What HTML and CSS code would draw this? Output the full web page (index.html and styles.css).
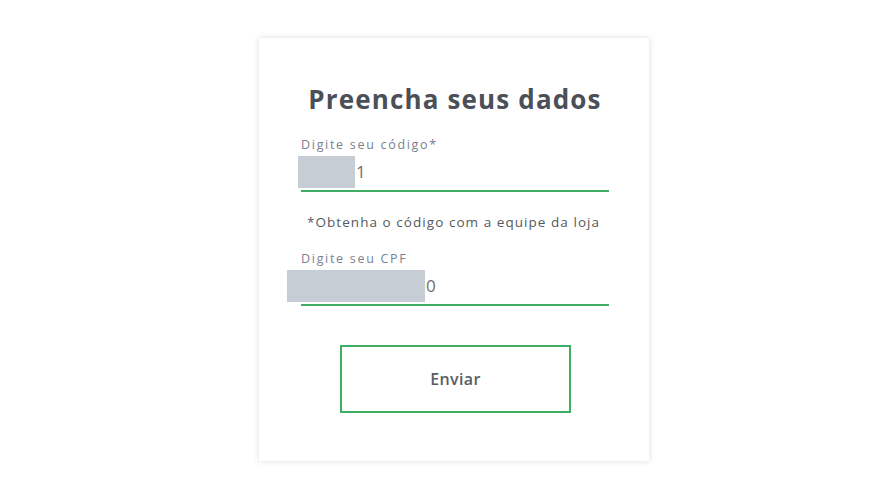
FILE: index.html
```html
<!DOCTYPE html>
<html lang="pt-BR">
<head>
<meta charset="utf-8">
<title>Preencha seus dados</title>
<link rel="stylesheet" href="styles.css">
</head>
<body>
<div class="page">
  <form class="card">
    <h1 class="title">Preencha seus dados</h1>
    <div class="field">
      <label class="label">Digite seu código*</label>
      <div class="input input-code">
        <span class="redact redact-code"></span><span class="value">1</span>
      </div>
    </div>
    <p class="hint">*Obtenha o código com a equipe da loja</p>
    <div class="field field-cpf">
      <label class="label">Digite seu CPF</label>
      <div class="input input-cpf">
        <span class="redact redact-cpf"></span><span class="value">0</span>
      </div>
    </div>
    <button type="button" class="btn">Enviar</button>
  </form>
</div>
</body>
</html>
```
FILE: styles.css
```css
* { box-sizing: border-box; }
html, body { margin: 0; padding: 0; background: #fff; }
body { font-family: "Open Sans", "Liberation Sans", sans-serif; }
.page {
  width: 889px;
  height: 500px;
  padding: 38px 0 0 19px;
  display: flex;
  justify-content: center;
  align-items: flex-start;
}
.card {
  width: 390px;
  height: 423px;
  background: #fff;
  box-shadow: 0 0 6px rgba(0,0,0,0.14);
  padding: 0 40px 0 42px;
  display: flex;
  flex-direction: column;
}
.title {
  margin: 45px 0 0 0;
  font-size: 26px;
  line-height: 32px;
  font-weight: 700;
  color: #4b5058;
  text-align: center;
  letter-spacing: 1.15px;
}
.field { display: flex; flex-direction: column; margin-top: 22px; }
.label {
  font-size: 12.5px;
  line-height: 16px;
  color: #7b808f;
  letter-spacing: 1.7px;
}
.input {
  height: 36px;
  border-bottom: 2px solid #40ad65;
  display: flex;
  align-items: flex-start;
  margin-top: 3px;
}
.redact { display: block; background: #c7cdd4; height: 32px; }
.redact-code { width: 57px; margin-left: -3px; }
.redact-cpf { width: 138px; margin-left: -14px; }
.value {
  font-size: 17px;
  line-height: 32px;
  color: #707070;
  padding-left: 1px;
}
.hint {
  margin: 21px 0 0 6px;
  font-size: 13.5px;
  line-height: 18px;
  color: #555a60;
  letter-spacing: 1.05px;
}
.field-cpf { margin-top: 20px; }
.btn {
  align-self: center;
  margin: 39px 0 0 1px;
  width: 231px;
  height: 68px;
  background: #fff;
  border: 2px solid #3fad63;
  font-family: inherit;
  font-size: 16px;
  font-weight: 600;
  color: #585d66;
  letter-spacing: 0.4px;
}
```
